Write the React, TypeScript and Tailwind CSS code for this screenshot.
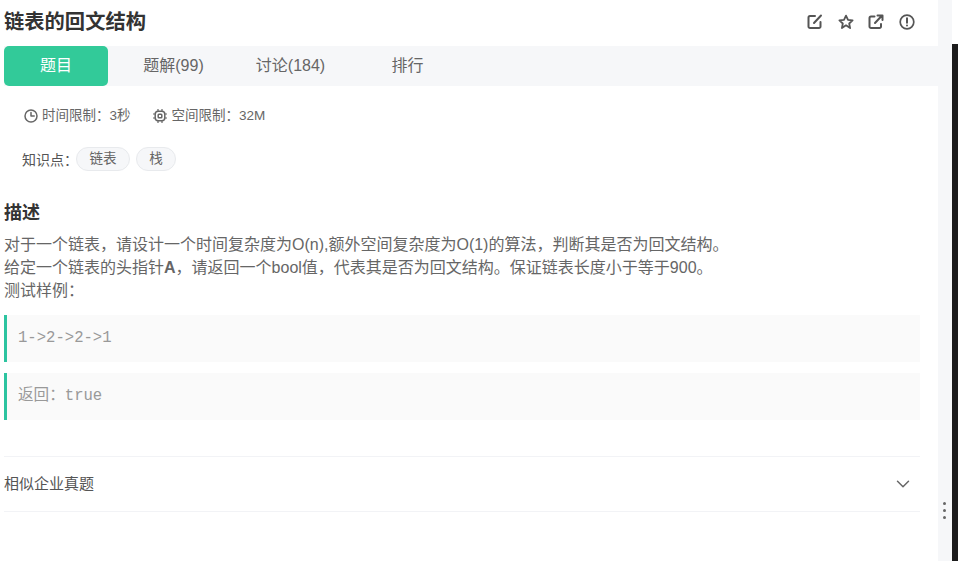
import { ChevronDown } from "lucide-react";

const font = { cjk: "font-['Liberation_Sans','Noto_Sans_CJK_SC',sans-serif]" };

function EditIcon() {
  return (
    <svg width="16" height="16" viewBox="0 0 16 16" fill="none" stroke="currentColor" strokeWidth="2" strokeLinecap="round">
      <path d="M8 2H3a1.5 1.5 0 0 0-1.5 1.5v9A1.5 1.5 0 0 0 3 14h9a1.5 1.5 0 0 0 1.5-1.5V8" />
      <path d="M7 9l7-7.5" />
    </svg>
  );
}

function StarIcon() {
  return (
    <svg width="16" height="16" viewBox="0 0 16 16" fill="none" stroke="currentColor" strokeWidth="1.8" strokeLinejoin="round">
      <path d="M8 1.6l2 4.2 4.6.6-3.4 3.1.9 4.6L8 11.3l-4.1 2.8.9-4.6L1.4 6.4 6 5.8z" />
    </svg>
  );
}

function ShareIcon() {
  return (
    <svg width="16" height="16" viewBox="0 0 16 16" fill="none" stroke="currentColor" strokeWidth="2" strokeLinecap="round" strokeLinejoin="round">
      <path d="M6.5 2.5H3A1.5 1.5 0 0 0 1.5 4v8.5A1.5 1.5 0 0 0 3 14h8.5a1.5 1.5 0 0 0 1.5-1.5V10" />
      <path d="M7 9l7-7.5M9.5 1.5H14.5V6" />
    </svg>
  );
}

function WarnIcon() {
  return (
    <svg width="16" height="16" viewBox="0 0 16 16" fill="none" stroke="currentColor" strokeWidth="1.7" strokeLinecap="round">
      <circle cx="8" cy="8" r="6.8" />
      <path d="M8 4.2v4.6M8 11.4v.2" strokeWidth="2" />
    </svg>
  );
}

function ClockIcon() {
  return (
    <svg width="14" height="14" viewBox="0 0 14 14" fill="none" stroke="currentColor" strokeWidth="1.5" strokeLinecap="round" strokeLinejoin="round">
      <circle cx="7" cy="7" r="6" />
      <path d="M7 3.4V7h3.2" />
    </svg>
  );
}

function ChipIcon() {
  return (
    <svg width="14" height="14" viewBox="0 0 14 14" fill="none" stroke="currentColor" strokeWidth="1.5">
      <rect x="2.2" y="2.2" width="9.6" height="9.6" rx="3" />
      <rect x="5.2" y="5.2" width="3.6" height="3.6" rx="0.8" />
      <path d="M5 0v2M9 0v2M5 12v2M9 12v2M0 5h2M0 9h2M12 5h2M12 9h2" strokeWidth="1.2" />
    </svg>
  );
}

function Tabs() {
  return (
    <div className="flex h-[40px] bg-[#f6f7f9] text-[16px] text-[#666666]">
      <div className="flex w-[104px] items-center justify-center rounded-[5px] bg-[#32ca99] text-white">题目</div>
      <div className="ml-[7px] flex w-[117px] items-center justify-center">题解(99)</div>
      <div className="flex w-[117px] items-center justify-center">讨论(184)</div>
      <div className="flex w-[117px] items-center justify-center">排行</div>
    </div>
  );
}

function CodeBlock({ children }: { children: React.ReactNode }) {
  return (
    <div className="flex h-[47px] w-[916px] items-center border-l-[3px] border-[#2dc4a0] bg-[#fafafa] pl-[11px] font-['Liberation_Mono','Noto_Sans_CJK_SC',monospace] text-[15.6px] text-[#999999]">
      {children}
    </div>
  );
}

export default function App() {
  return (
    <div className={`flex h-[561px] w-[958px] overflow-hidden bg-white ${font.cjk}`}>
      <div className="w-[938px] shrink-0">
        <div className="flex h-[46px] items-center justify-between pb-[2px] pl-[4px] pr-[23px]">
          <h1 className="text-[20.3px] font-bold text-[#333333]">链表的回文结构</h1>
          <div className="flex items-center gap-[14.6px] text-[#555555]">
            <EditIcon />
            <StarIcon />
            <ShareIcon />
            <WarnIcon />
          </div>
        </div>
        <div className="pl-[4px]">
          <Tabs />
        </div>
        <div className="flex items-center pl-[24px] pt-[20px] text-[13.5px] leading-[20px] text-[#666666]">
          <ClockIcon />
          <span className="ml-[4px]">时间限制：3秒</span>
          <span className="ml-[22px]">
            <ChipIcon />
          </span>
          <span className="ml-[5px]">空间限制：32M</span>
        </div>
        <div className="flex items-center pl-[22px] pt-[21px] text-[14px] text-[#555555]">
          <span className="mt-[3px]">知识点：</span>
          <span className="-ml-[2px] flex h-[24px] w-[54px] items-center justify-center rounded-full border border-[#e8eaed] bg-[#f6f7f9] text-[13.5px] text-[#666666]">链表</span>
          <span className="ml-[6px] flex h-[24px] w-[40px] items-center justify-center rounded-full border border-[#e8eaed] bg-[#f6f7f9] text-[13.5px] text-[#666666]">栈</span>
        </div>
        <div className="pl-[4px]">
          <h2 className="pt-[29px] text-[18px] font-bold leading-[26px] text-[#333333]">描述</h2>
          <div className="pt-[7px] text-[16px] leading-[23px] text-[#666666]">
            <p>对于一个链表，请设计一个时间复杂度为O(n),额外空间复杂度为O(1)的算法，判断其是否为回文结构。</p>
            <p>给定一个链表的头指针<b>A</b>，请返回一个bool值，代表其是否为回文结构。保证链表长度小于等于900。</p>
            <p>测试样例：</p>
          </div>
          <div className="flex flex-col gap-[11px] pt-[13px]">
            <CodeBlock>1-&gt;2-&gt;2-&gt;1</CodeBlock>
            <CodeBlock>返回：true</CodeBlock>
          </div>
          <div className="mt-[36px] flex h-[56px] w-[916px] items-center justify-between border-y border-[#f2f3f6] pr-[6px] text-[15px] text-[#555555]">
            <span>相似企业真题</span>
            <ChevronDown size={22} strokeWidth={1.6} className="text-[#666666]" />
          </div>
        </div>
      </div>
      <div className="flex w-[14px] shrink-0 flex-col items-center gap-[4px] bg-[#f6f7f9] pr-[2px] pt-[502px]">
        <i className="h-[3px] w-[3px] rounded-full bg-[#666666]" />
        <i className="h-[3px] w-[3px] rounded-full bg-[#666666]" />
        <i className="h-[3px] w-[3px] rounded-full bg-[#666666]" />
      </div>
      <div className="flex-1 pt-[44px]">
        <div className="h-full bg-[#1c1c1c]" />
      </div>
    </div>
  );
}
